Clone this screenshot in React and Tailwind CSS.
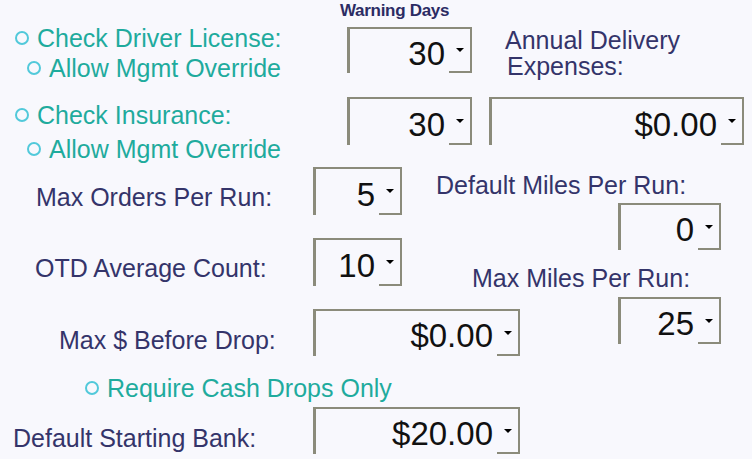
import React from 'react'

function Radio({ label, className = '' }) {
  return (
    <div className={`flex items-center h-[30px] text-[25px] leading-[30px] text-[#1fab9d] ${className}`}>
      <span className="inline-block w-[14px] h-[14px] rounded-full border-2 border-[#52c9da] mr-[8px] shrink-0" />
      <span className="whitespace-nowrap">{label}</span>
    </div>
  )
}

function Label({ children, className = '' }) {
  return (
    <div className={`h-[30px] shrink-0 text-[25px] leading-[30px] text-[#34346a] whitespace-nowrap ${className}`}>
      {children}
    </div>
  )
}

function Combo({ value, className = '' }) {
  return (
    <div className={`flex border-t-2 border-l-[3px] border-r-2 border-[#8b8b7b] shrink-0 ${className}`}>
      <div className="flex-1 flex items-center justify-end pr-[4px] pt-[4px] text-[33px] leading-none text-[#111]">
        {value}
      </div>
      <div className="w-[21px] flex items-center justify-center border-b-2 border-[#8b8b7b]">
        <span className="w-0 h-0 border-l-[4px] border-r-[4px] border-t-[4px] border-l-transparent border-r-transparent border-t-black" />
      </div>
    </div>
  )
}

export default function App() {
  return (
    <div className="w-[752px] h-[459px] overflow-hidden bg-[#f8f8fd] font-['Liberation_Sans',Arial,sans-serif]">
      <div className="h-[22px] pl-[340px] pt-[2px] text-[17px] leading-[18px] font-bold tracking-[-0.3px] text-[#2c2c64]">
        Warning Days
      </div>

      {/* driver license row */}
      <div className="flex items-start">
        <div className="w-[347px] shrink-0 mt-[1px]">
          <Radio label="Check Driver License:" className="pl-[15px]" />
          <Radio label="Allow Mgmt Override" className="pl-[27px]" />
        </div>
        <Combo value="30" className="w-[125px] h-[46px] mt-[5px]" />
        <div className="ml-[33px] mt-[5px] text-[25px] leading-[26px] text-[#34346a]">
          <div>Annual Delivery</div>
          <div className="pl-[2px]">Expenses:</div>
        </div>
      </div>

      {/* insurance row */}
      <div className="flex items-start mt-[14px]">
        <div className="w-[347px] shrink-0">
          <Radio label="Check Insurance:" className="pl-[15px] mt-[3px]" />
          <Radio label="Allow Mgmt Override" className="pl-[27px] mt-[4px]" />
        </div>
        <Combo value="30" className="w-[125px] h-[48px]" />
        <Combo value="$0.00" className="w-[255px] h-[48px] ml-[17px]" />
      </div>

      {/* lower section */}
      <div className="flex items-start">
        <div className="w-[436px] shrink-0">
          <div className="flex items-start mt-[3px]">
            <Label className="w-[313px] pl-[36px] mt-[15px]">Max Orders Per Run:</Label>
            <Combo value="5" className="w-[89px] h-[48px]" />
          </div>
          <div className="flex items-start mt-[23px]">
            <Label className="w-[313px] pl-[35px] mt-[15px]">OTD Average Count:</Label>
            <Combo value="10" className="w-[89px] h-[48px]" />
          </div>
          <div className="flex items-start mt-[23px]">
            <Label className="w-[313px] pl-[59px] mt-[16px]">Max $ Before Drop:</Label>
            <Combo value="$0.00" className="w-[207px] h-[47px]" />
          </div>
          <Radio label="Require Cash Drops Only" className="pl-[85px] mt-[17px]" />
          <div className="flex items-start mt-[4px]">
            <Label className="w-[313px] pl-[13px] mt-[16px]">Default Starting Bank:</Label>
            <Combo value="$20.00" className="w-[207px] h-[47px]" />
          </div>
        </div>

        <div className="flex-1">
          <Label className="mt-[6px]">Default Miles Per Run:</Label>
          <Combo value="0" className="w-[103px] h-[47px] ml-[182px] mt-[3px]" />
          <Label className="ml-[36px] mt-[13px]">Max Miles Per Run:</Label>
          <Combo value="25" className="w-[103px] h-[47px] ml-[182px] mt-[4px]" />
        </div>
      </div>
    </div>
  )
}
